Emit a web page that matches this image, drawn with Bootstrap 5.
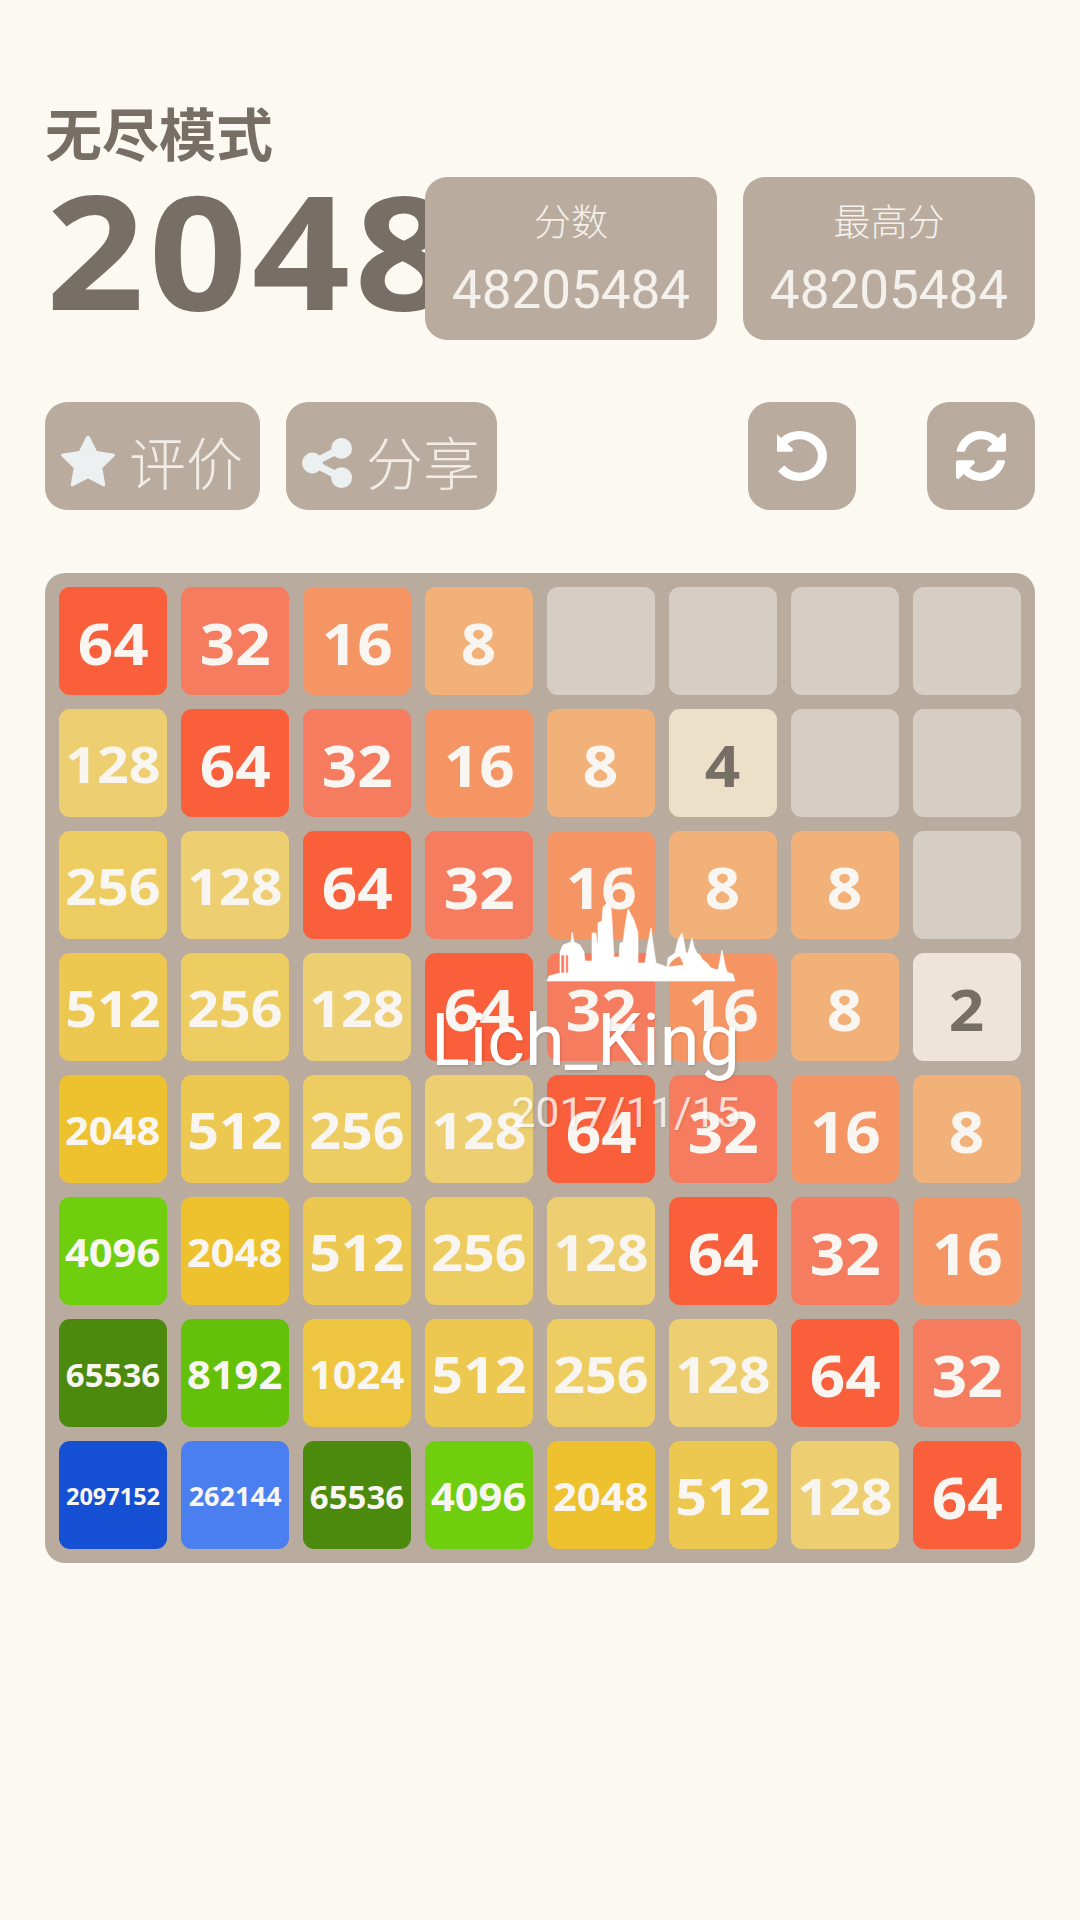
<!DOCTYPE html>
<html lang="zh-CN">
<head>
  <meta charset="UTF-8">
  <meta name="viewport" content="width=device-width, initial-scale=1">
  <title>2048 无尽模式</title>
  <link href="https://cdn.jsdelivr.net/npm/bootstrap@5.3.0/dist/css/bootstrap.min.css" rel="stylesheet">
  <style>
    body { background: #fcf9f2; font-family: "Noto Sans CJK SC", sans-serif; min-height: 1920px; }
    .page-wrap { padding: 97px 45px 0; }
    .game-head { height: 243px; margin-bottom: 62px; }
    .head-left { width: 380px; }
    .mode-title { font-size: 57px; line-height: 68px; font-weight: 700; color: #776e65; white-space: nowrap; }
    .logo-text { display: inline-block; font-family: "Noto Sans", sans-serif; font-size: 158px; line-height: 170px; font-weight: 700; color: #776e65; white-space: nowrap; letter-spacing: 4px; margin: -1px 0 0 1px; transform: scaleX(1.09); transform-origin: left center; }
    .score-box { width: 292px; height: 163px; margin-top: 80px; background: #b9ac9f; border-radius: 22px; color: #f4f0eb; position: relative; }
    .score-label { font-size: 37px; line-height: 50px; font-weight: 300; margin-top: 18px; }
    .score-num { font-family: Roboto, sans-serif; font-size: 53px; line-height: 62px; margin-top: 14px; }
    .tool-row { margin-bottom: 63px; }
    .tool-btn { height: 108px; background: #b9ac9f; border-radius: 22px; color: #f1ece6; }
    .tool-wide { font-size: 57px; font-weight: 300; padding: 10px 17px 0 16px; gap: 14px; }
    .tool-icon { margin-top: 4px; }
    .tool-square { width: 108px; }
    .tool-gap { gap: 26px; }
    .tool-gap-wide { gap: 71px; }
    .game-board { display: grid; grid-template-columns: repeat(8, 108px); gap: 14px; padding: 14px; background: #b9ac9f; border-radius: 20px; }
    .game-tile { height: 108px; padding-top: 3px; background: #d6cdc4; border-radius: 11px; font-family: "Noto Sans", sans-serif; font-weight: 700; color: #f9f6f2; }
    .tile-num { display: inline-block; }
    .digits-1, .digits-2 { font-size: 58px; }
    .digits-1 .tile-num, .digits-2 .tile-num { transform: scaleX(1.07); }
    .digits-3 { font-size: 50px; }
    .digits-3 .tile-num { transform: scaleX(1.11); }
    .digits-4 { font-size: 39px; }
    .digits-4 .tile-num { transform: scaleX(1.07); }
    .digits-5 { font-size: 33px; }
    .digits-6 { font-size: 27px; }
    .digits-7 { font-size: 23.500px; }
    .tile-2 { background: #eee4da; color: #776e65; }
    .tile-4 { background: #ede0c8; color: #776e65; }
    .tile-8 { background: #f2b179; }
    .tile-16 { background: #f59563; }
    .tile-32 { background: #f67c5f; }
    .tile-64 { background: #f95f3b; }
    .tile-128 { background: #edcf72; }
    .tile-256 { background: #edcc61; }
    .tile-512 { background: #edc850; }
    .tile-1024 { background: #edc53f; }
    .tile-2048 { background: #edc22e; }
    .tile-4096 { background: #6fcf0f; }
    .tile-8192 { background: #63c10a; }
    .tile-65536 { background: #4b8a0c; }
    .tile-262144 { background: #4b7ff0; }
    .tile-2097152 { background: #144fd4; }
    .water-mark { top: 327px; right: 295px; z-index: 2; color: #fff; text-align: right; pointer-events: none; font-family: Roboto, sans-serif; text-shadow: 1px 1px 3px rgba(0,0,0,.15); }
    .water-name { font-size: 72px; line-height: 84px; margin-top: 14px; }
    .water-date { font-size: 43px; line-height: 50px; margin-top: 4px; opacity: .75; }
    .sky-line { display: block; margin-left: auto; }
  </style>
</head>
<body>
  <div class="page-wrap">
    <div class="game-head d-flex">
      <div class="head-left flex-shrink-0">
        <div class="mode-title">无尽模式</div>
        <div class="logo-text">2048</div>
      </div>
      <div class="d-flex tool-gap">
        <div class="score-box text-center">
          <div class="score-label">分数</div>
          <div class="score-num">48205484</div>
        </div>
        <div class="score-box text-center">
          <div class="score-label">最高分</div>
          <div class="score-num">48205484</div>
        </div>
      </div>
    </div>

    <div class="tool-row d-flex justify-content-between">
      <div class="d-flex tool-gap">
        <div class="tool-btn tool-wide d-flex align-items-center">
          <svg class="tool-icon" width="54" height="54" viewBox="64 64 1664 1664" fill="#ecf0f1"><path d="M1728 647q0 22-26 48l-363 354 86 500q1 7 1 20 0 21-10.5 35.5t-30.5 14.5q-19 0-40-12l-449-236-449 236q-22 12-40 12-21 0-31.5-14.5t-10.5-35.5q0-6 2-20l86-500-364-354q-25-27-25-48 0-37 56-46l502-73 225-455q19-41 49-41t49 41l225 455 502 73q56 9 56 46z"/></svg>
          <span>评价</span>
        </div>
        <div class="tool-btn tool-wide d-flex align-items-center">
          <svg class="tool-icon" width="50" height="50" viewBox="128 128 1536 1536" fill="#ecf0f1"><path d="M1344 1024q133 0 226.5 93.5t93.5 226.5-93.5 226.5-226.5 93.5-226.5-93.5-93.5-226.5q0-12 2-34l-360-180q-92 86-218 86-133 0-226.5-93.5t-93.5-226.5 93.5-226.5 226.5-93.5q126 0 218 86l360-180q-2-22-2-34 0-133 93.5-226.5t226.5-93.5 226.5 93.5 93.5 226.5-93.5 226.5-226.5 93.5q-126 0-218-86l-360 180q2 22 2 34t-2 34l360 180q92-86 218-86z"/></svg>
          <span>分享</span>
        </div>
      </div>
      <div class="d-flex tool-gap-wide">
        <div class="tool-btn tool-square d-flex align-items-center justify-content-center">
          <svg width="50" height="50" viewBox="128 128 1408 1536" preserveAspectRatio="none" fill="#fff"><path d="M1536 896q0 156-61 298t-164 245-245 164-298 61q-172 0-327-72.5t-264-204.5q-7-10-6.5-22.5t8.5-20.5l137-138q10-9 25-9 16 2 23 12 73 95 179 147t225 52q104 0 198.5-40.5t163.5-109.5 109.5-163.5 40.5-198.5-40.5-198.5-109.5-163.5-163.5-109.5-198.5-40.5q-98 0-188 35.5t-160 101.5l137 138q31 30 14 69-17 40-59 40h-448q-26 0-45-19t-19-45v-448q0-42 40-59 39-17 69 14l130 129q107-101 244.5-156.5t284.5-55.5q156 0 298 61t245 164 164 245 61 298z"/></svg>
        </div>
        <div class="tool-btn tool-square d-flex align-items-center justify-content-center">
          <svg width="50" height="50" viewBox="128 128 1536 1536" fill="#fff"><path d="M1639 1056q0 5-1 7-64 268-268 434.5t-478 166.5q-146 0-282.5-55t-243.5-157l-129 129q-19 19-45 19t-45-19-19-45v-448q0-26 19-45t45-19h448q26 0 45 19t19 45-19 45l-137 137q71 66 161 102t187 36q134 0 250-65t186-179q11-17 53-117 8-23 30-23h192q13 0 22.5 9.5t9.5 22.5zm25-800v448q0 26-19 45t-45 19h-448q-26 0-45-19t-19-45 19-45l138-138q-148-137-349-137-134 0-250 65t-186 179q-11 17-53 117-8 23-30 23h-199q-13 0-22.5-9.5t-9.5-22.5v-7q65-268 270-434.5t480-166.5q146 0 284 55.5t245 156.5l130-129q19-19 45-19t45 19 19 45z"/></svg>
        </div>
      </div>
    </div>

    <div id="board" class="game-board position-relative">
      <div class="water-mark position-absolute">
        <svg class="sky-line" width="195" height="85" viewBox="545 900 195 85" fill="#fff" stroke="#fff" stroke-width=".6" fill-rule="evenodd"><path d="M547 981L549 976 560 973V952L563 945 571 942 572 932 574 942 580 945 584 952 585 961H592V933H596L597 943H598V923L602 921 603 907 607 903 611 908 612 920 613 940 614 957 619 957 620 943 623 942 625 927 628 909 634 920 638 933V963L645 963 648 943 651 928 653 943 656 963 667 967 668 958 675 953 678 940 682 933 684 942 686 953H688L692 938 694 947 697 953 700 955 702 959 707 963 711 968 718 970 722 950 725 965 727 972 733 974 735 981ZM561 955V973H564.300V955ZM565.700 955V973H568.300V955ZM668 967L684 965 680 956Q672 958 668 967Z"/></svg>
        <div class="water-name">Lich_King</div>
        <div class="water-date">2017/11/15</div>
      </div>
    </div>
  </div>

  <script src="https://cdn.jsdelivr.net/npm/bootstrap@5.3.0/dist/js/bootstrap.bundle.min.js"></script>
  <script>
    const rows = [
      [64, 32, 16, 8, 0, 0, 0, 0],
      [128, 64, 32, 16, 8, 4, 0, 0],
      [256, 128, 64, 32, 16, 8, 8, 0],
      [512, 256, 128, 64, 32, 16, 8, 2],
      [2048, 512, 256, 128, 64, 32, 16, 8],
      [4096, 2048, 512, 256, 128, 64, 32, 16],
      [65536, 8192, 1024, 512, 256, 128, 64, 32],
      [2097152, 262144, 65536, 4096, 2048, 512, 128, 64]
    ];

    const board = document.getElementById('board');
    const mark = board.querySelector('.water-mark');
    rows.flat().forEach(value => {
      const tile = document.createElement('div');
      tile.className = 'game-tile d-flex align-items-center justify-content-center';
      if (value) {
        tile.classList.add('tile-' + value, 'digits-' + String(value).length);
        const num = document.createElement('span');
        num.className = 'tile-num';
        num.textContent = value;
        tile.appendChild(num);
      }
      board.insertBefore(tile, mark);
    });
  </script>
</body>
</html>
